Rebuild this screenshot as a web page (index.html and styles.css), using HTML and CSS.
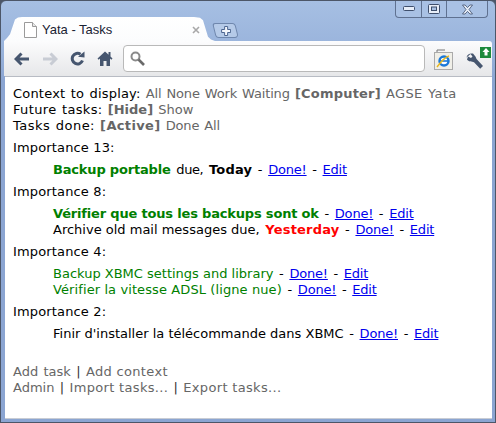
FILE: index.html
```html
<!DOCTYPE html>
<html lang="en">
<head>
<meta charset="utf-8">
<title>Yata - Tasks</title>
<link rel="stylesheet" href="styles.css">
</head>
<body>
<div class="window">
  <div class="controls">
    <span class="ctl ctl-min"><svg width="12" height="6" viewBox="0 0 12 6"><rect x="0.5" y="0.5" width="11" height="4" rx="1" fill="#e8eef8" stroke="#3f4f6c"/></svg></span>
    <span class="ctl ctl-max"><svg width="12" height="10" viewBox="0 0 12 10"><rect x="0.5" y="0.5" width="11" height="9" rx="1" fill="#e8eef8" stroke="#3f4f6c"/><rect x="3.5" y="3" width="5" height="3.5" fill="#a8c0e2" stroke="#3f4f6c" stroke-width="1"/></svg></span>
    <span class="ctl ctl-close"><svg width="13" height="11" viewBox="0 0 13 11"><path d="M1.5 1h2.6l2.4 2.6L8.900 1h2.600L8 5.500l3.500 4.500H8.900L6.500 7.400 4.100 10H1.500L5 5.500z" fill="#e8eef8" stroke="#3f4f6c" stroke-width="0.8"/></svg></span>
  </div>
  <div class="tabstrip">
    <div class="tab">
      <svg class="fav" width="13" height="16" viewBox="0 0 13 16"><path d="M0.5 0.5h8l4 4v11h-12z" fill="#fff" stroke="#9a9a9a"/><path d="M8.500 0.500v4h4" fill="#e8e8e8" stroke="#9a9a9a"/></svg>
      <span class="tab-title">Yata - Tasks</span>
      <svg class="tab-close" width="8" height="8" viewBox="0 0 8 8"><path d="M1 1l6 6M7 1l-6 6" stroke="#a8a8a8" stroke-width="1.6"/></svg>
    </div>
    <div class="newtab"><svg width="10" height="10" viewBox="0 0 10 10"><path d="M3.500 0.500h3v3h3v3h-3v3h-3v-3h-3v-3h3z" fill="#f4f7fc" stroke="#4d6690"/></svg></div>
  </div>
  <div class="toolbar">
    <svg class="tool tool-back" width="15" height="14" viewBox="0 0 15 14"><path d="M7.500 1.500L2 7l5.500 5.500M3 7h12" fill="none" stroke="#46566f" stroke-width="3"/></svg>
    <svg class="tool tool-fwd" width="15" height="14" viewBox="0 0 15 14"><path d="M7.500 1.500L13 7l-5.500 5.500M12 7H0" fill="none" stroke="#c8ccd4" stroke-width="3"/></svg>
    <svg class="tool tool-reload" width="15" height="15" viewBox="0 0 15 15"><path d="M12.500 9.500A5.300 5.300 0 1 1 10.500 3.200" fill="none" stroke="#46566f" stroke-width="3"/><path d="M8 5.800L14.500 6.500V0.500z" fill="#46566f"/></svg>
    <svg class="tool tool-home" width="16" height="15" viewBox="0 0 16 15"><path d="M8 0.500L0.500 7.500l1.200 1.200L3 7.500V15h3.500v-5h3v5H13V7.500l1.300 1.200 1.200-1.200L13.500 5.600V1h-2v2.800L10 2.200z" fill="#46566f"/></svg>
    <div class="omnibox">
      <svg width="15" height="15" viewBox="0 0 15 15"><circle cx="5.500" cy="5.500" r="4" fill="#fff" stroke="#8a8a8a" stroke-width="2"/><path d="M8.500 8.500L14 14" stroke="#6a6a6a" stroke-width="2.600"/></svg>
    </div>
    <div class="ie-box">
      <svg width="19" height="21" viewBox="0 0 19 21"><path d="M3 3.500V1h8" fill="none" stroke="#777"/><rect x="0.500" y="3.500" width="18" height="17" fill="#f0efe8" stroke="#aaa"/><circle cx="10" cy="12" r="4.500" fill="#fff" stroke="#1a78d8" stroke-width="2.400"/><path d="M6 12h8" stroke="#1a78d8" stroke-width="1.600"/><path d="M3 18C6 14 11 8 15 7" fill="none" stroke="#e8b820" stroke-width="1.400"/></svg>
    </div>
    <div class="wrench">
      <svg width="22" height="24" viewBox="0 0 22 24"><path d="M0.500 10.500C1 7 4 6 7 6.500l2 2.500c1 1 1 2.500 2 3.500l6 6.500-2.800 2.800-6.200-6.500c-2-1-5.500-.5-7-2.800l1-3 3 1.500 1.500-1.500-2-2.500z" fill="#46566f"/></svg>
      <span class="badge"><svg width="10" height="10" viewBox="0 0 10 10"><path d="M5 1l3.500 4H6.500v3.500h-3V5H1.500z" fill="#fff"/></svg></span>
    </div>
  </div>
  <main class="page">
    <div class="filters">
      <div><span class="lbl">Context to display:</span> <span class="nav tight"><a>All</a> <a>None</a> <a>Work</a> <a>Waiting</a></span> <b class="nav tag">[Computer]</b> <span class="nav wide"><a>AGSE</a> <a>Yata</a></span></div>
      <div><span class="lbl-future">Future tasks:</span> <b class="nav">[Hide]</b> <a class="nav">Show</a></div>
      <div><span class="lbl-done">Tasks done:</span> <b class="nav tag-wide">[Active]</b> <span class="nav tight"><a>Done</a> <a>All</a></span></div>
    </div>
    <section class="group">
      <h2>Importance 13:</h2>
      <ul>
        <li><b class="green">Backup portable</b> <span class="plain due">due,</span> <b class="date">Today</b> - <a href="#">Done!</a> - <a href="#">Edit</a></li>
      </ul>
    </section>
    <section class="group">
      <h2>Importance 8:</h2>
      <ul>
        <li><b class="green">Vérifier que tous les backups sont ok</b> - <a href="#">Done!</a> - <a href="#">Edit</a></li>
        <li><span class="plain">Archive old mail messages due,</span> <b class="red date">Yesterday</b> - <a href="#">Done!</a> - <a href="#">Edit</a></li>
      </ul>
    </section>
    <section class="group">
      <h2>Importance 4:</h2>
      <ul>
        <li><span class="plain green-text">Backup XBMC settings and library</span> - <a href="#">Done!</a> - <a href="#">Edit</a></li>
        <li><span class="plain green-text nudge">Vérifier la vitesse ADSL (ligne nue)</span> - <a href="#">Done!</a> - <a href="#">Edit</a></li>
      </ul>
    </section>
    <section class="group">
      <h2>Importance 2:</h2>
      <ul>
        <li><span class="plain">Finir d'installer la télécommande dans XBMC</span> - <a href="#">Done!</a> - <a href="#">Edit</a></li>
      </ul>
    </section>
    <div class="footer">
      <div><a class="nav">Add task</a> | <a class="nav stretch">Add context</a></div>
      <div><a class="nav">Admin</a> | <a class="nav stretch">Import tasks...</a> | <a class="nav stretch">Export tasks...</a></div>
    </div>
  </main>
</div>
</body>
</html>
```
FILE: styles.css
```css
html, body { margin: 0; height: 100%; }
body { background: #4c5668; overflow: hidden; }
.window {
  position: relative;
  box-sizing: border-box;
  width: 496px;
  height: 423px;
  display: flex;
  flex-direction: column;
  background: linear-gradient(#a6bfe3, #9ab4dc 45px, #8ba5d2 80px);
  border: 1px solid #4c5668;
  border-radius: 6px 6px 0 0;
  font-family: "DejaVu Sans", Verdana, sans-serif;
}
.controls {
  position: absolute;
  top: 0;
  right: 7px;
  width: 91px;
  height: 16px;
  display: flex;
  border: 1px solid #5f7190;
  border-top: 0;
  border-radius: 0 0 4px 4px;
  background: #a9c1e4;
}
.ctl {
  display: flex;
  align-items: center;
  justify-content: center;
  border-left: 1px solid #5f7190;
}
.ctl-min { width: 25px; border-left: 0; }
.ctl-max { width: 24px; }
.ctl-close { flex: 1; }
.tabstrip {
  height: 24px;
  margin-top: 16px;
  display: flex;
  align-items: flex-end;
  padding-left: 3px;
  flex: none;
}
.tab {
  box-sizing: border-box;
  width: 211px;
  height: 24px;
  background: linear-gradient(#ffffff, #fbfcfd);
  clip-path: polygon(0 100%, 3px 88%, 6px 72%, 11px 10%, 14px 2%, 18px 0, 190px 0, 196px 3%, 199px 14%, 204px 82%, 207px 94%, 211px 100%);
  display: flex;
  align-items: center;
  padding: 1px 15px 0 20px;
  color: #1a2333;
  font: 13px "Liberation Sans", Arial, sans-serif;
}
.fav { margin-right: 5px; flex: none; }
.tab-title { flex: 1; white-space: nowrap; }
.newtab {
  box-sizing: border-box;
  width: 23px;
  height: 15px;
  margin: 0 0 3px -1px;
  background: #b5cae8;
  border: 1px solid #6f87ad;
  border-radius: 3px 3px 4px 3px;
  transform: skewX(14deg);
  display: flex;
  align-items: center;
  justify-content: center;
}
.newtab svg { transform: skewX(-14deg); }
.toolbar {
  flex: none;
  margin: 0 3px;
  height: 35px;
  background: linear-gradient(#fcfcfd, #e6e7e9);
  display: flex;
  align-items: center;
  padding-left: 10px;
  border-radius: 0 3px 0 0;
}
.tool { flex: none; }
.tool-fwd { margin-left: 14px; }
.tool-reload { margin-left: 12px; }
.tool-home { margin-left: 12px; }
.omnibox {
  box-sizing: border-box;
  width: 302px;
  height: 27px;
  margin: 0 0 0 10px;
  background: #fff;
  border: 1px solid #b9b9b9;
  border-radius: 4px;
  display: flex;
  align-items: center;
  padding-left: 6px;
}
.ie-box { margin-left: 9px; margin-top: 1px; height: 21px; }
.wrench { position: relative; margin-left: 13px; width: 22px; height: 24px; }
.badge {
  position: absolute;
  top: 0;
  right: -3px;
  width: 11px;
  height: 11px;
  background: #1d8a3c;
  display: flex;
  align-items: center;
  justify-content: center;
}
.page {
  flex: 1;
  margin: 0 3px 3px 4px;
  padding: 9px 8px 7px;
  background: #fff;
  border-top: 1px solid #b8bcc4;
  border-bottom: 1px solid #c8ccd4;
  font-size: 13px;
  line-height: 16px;
  color: #000;
  min-height: 0;
  overflow: hidden;
}
.nav { color: #666; }
.filters { margin-bottom: 6px; word-spacing: 1px; }
.lbl { letter-spacing: 0.2px; }
.lbl-future { letter-spacing: 0.35px; }
.lbl-done { letter-spacing: 0.47px; }
.tight { letter-spacing: -0.15px; }
.wide { letter-spacing: 0.35px; }
.tag { letter-spacing: 0.2px; }
.tag-wide { letter-spacing: 0.35px; }
.group { margin-bottom: 6px; }
h2 { margin: 0 0 6px; font: inherit; letter-spacing: 0.15px; }
ul { list-style: none; margin: 0; padding: 0 0 0 40px; }
li { word-spacing: 1.5px; }
.plain, .green { word-spacing: 0; }
.green { color: #008000; letter-spacing: -0.18px; }
.green-text { color: #008000; }
.nudge { letter-spacing: 0.1px; }
.due { letter-spacing: -0.4px; }
.date { letter-spacing: 0.2px; }
.red { color: #ff0000; }
a[href] { color: #0000ee; text-decoration: underline; letter-spacing: -0.2px; word-spacing: 0; }
.footer { margin-top: 22px; color: #333; word-spacing: 1.2px; }
.stretch { letter-spacing: 0.33px; word-spacing: 0; }
```
